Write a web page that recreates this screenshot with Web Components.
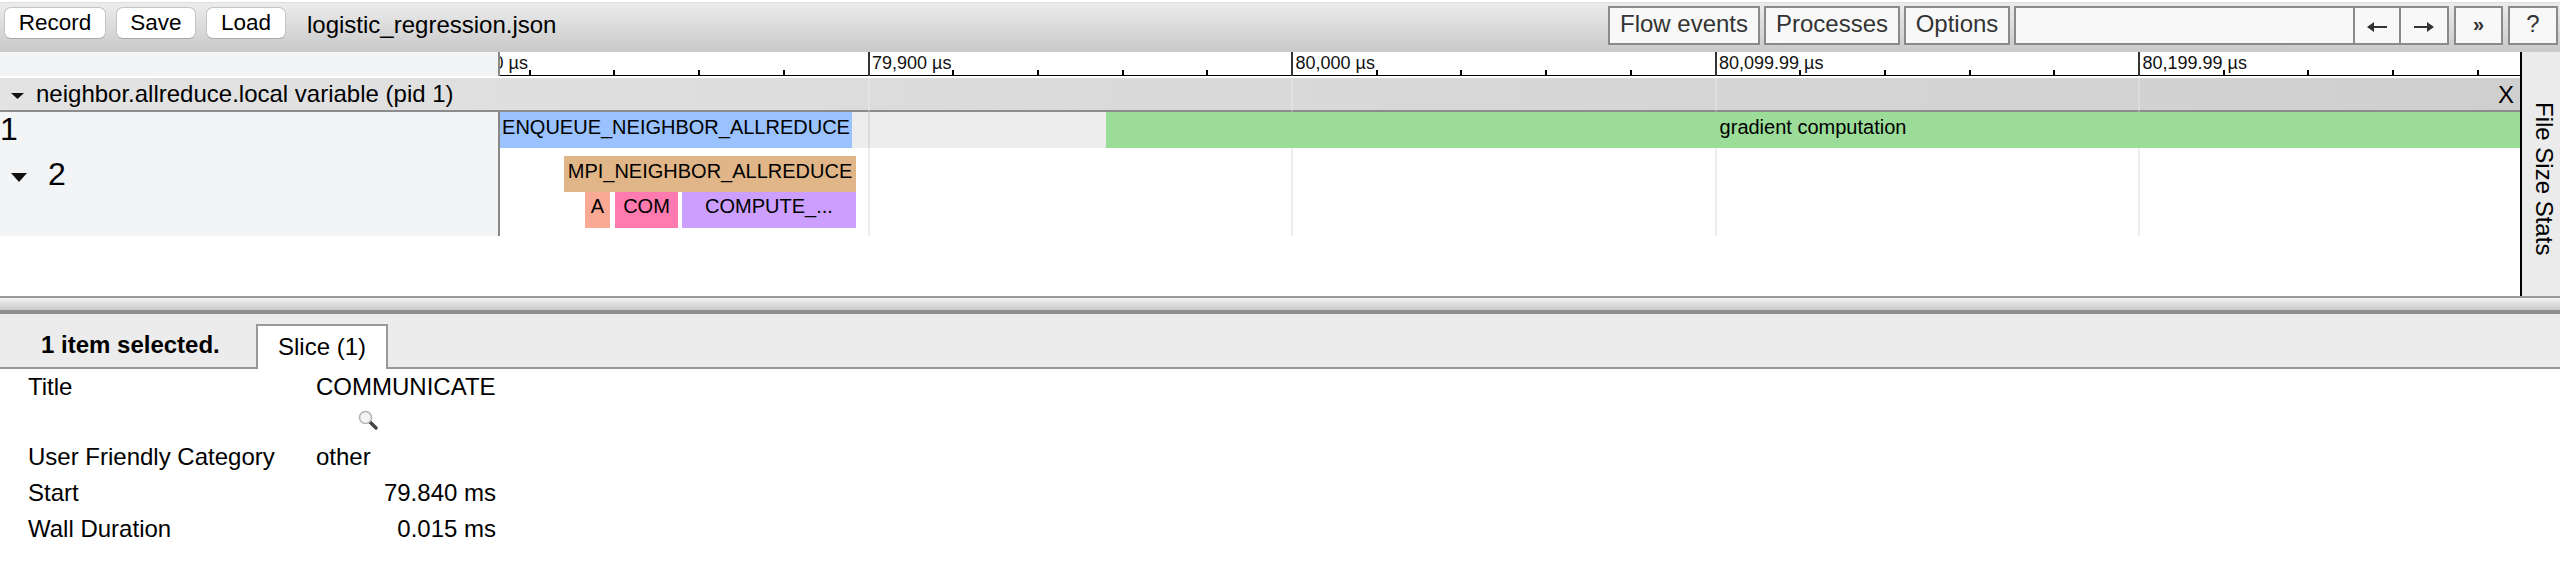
<!DOCTYPE html>
<html><head><meta charset="utf-8">
<style>
html,body{margin:0;padding:0;background:#fff;overflow:hidden}
body{font:24px "Liberation Sans",Arial,sans-serif;color:#000}
</style></head><body>
<tv-app>
  <tv-toolbar title-text="logistic_regression.json"></tv-toolbar>
  <tv-main>
    <tv-timeline></tv-timeline>
    <tv-side>File Size Stats</tv-side>
  </tv-main>
  <tv-resizer></tv-resizer>
  <tv-analysis></tv-analysis>
</tv-app>
<script>
function def(name, css, html, init){
  customElements.define(name, class extends HTMLElement{
    constructor(){super();const s=this.attachShadow({mode:'open'});
      s.innerHTML='<style>'+css+'</style>'+(typeof html==='function'?html(this):html);}
    connectedCallback(){ if(init) init(this); }
  });
}
const MAJ=[445,868.5,1292,1715.5,2139];
const LANE=500;

def('tv-app',':host{display:flex;flex-direction:column;width:2560px;height:582px;overflow:hidden}','<slot></slot>');

def('tv-light-btn',`:host{display:flex;align-items:center;justify-content:center;box-sizing:border-box;height:32px;background:#fff;border:1px solid #c4c4c4;border-bottom-color:#aaa;border-radius:7px;font-size:22.5px;color:#000}`,'<slot></slot>');
def('tv-box-btn',`:host{display:flex;align-items:center;justify-content:center;box-sizing:border-box;height:39px;background:#f8f8f8;border:2px solid #8a8a8a;font-size:24px;color:#333;padding-bottom:3px}`,'<slot></slot>');

def('tv-toolbar',`
:host{display:block;height:52px;box-sizing:border-box;padding-top:2px;background:#fff}
.bar{border-top:1px solid #dcdce2;box-sizing:border-box;height:50px;background:linear-gradient(#ececec,#c9c9c9);display:flex;align-items:flex-start;padding:0 2px 0 4px}
.l{display:flex;gap:10px;margin-top:4px}
.t{margin-left:21px;margin-top:7px;font-size:24px;line-height:30px;color:#000}
.sp{flex:1}
.r{display:flex;margin-top:3px}
svg{display:block;margin-top:5px}
`,`<div class="bar">
<div class="l"><tv-light-btn style="width:102px">Record</tv-light-btn><tv-light-btn style="width:80px">Save</tv-light-btn><tv-light-btn style="width:80px">Load</tv-light-btn></div>
<div class="t">logistic_regression.json</div><div class="sp"></div>
<div class="r">
<tv-box-btn style="width:152px">Flow events</tv-box-btn>
<tv-box-btn style="width:136px;margin-left:4px">Processes</tv-box-btn>
<tv-box-btn style="width:106px;margin-left:4px">Options</tv-box-btn>
<tv-box-btn style="width:341px;margin-left:4px"></tv-box-btn>
<tv-box-btn style="width:48px;margin-left:-2px"><svg width="20" height="10" viewBox="0 0 20 10"><path d="M0 5L7 0V4H20V6H7V10Z" fill="#333"/></svg></tv-box-btn>
<tv-box-btn style="width:50px;margin-left:-2px"><svg width="20" height="10" viewBox="0 0 20 10"><path d="M20 5L13 0V4H0V6H13V10Z" fill="#333"/></svg></tv-box-btn>
<tv-box-btn style="width:49px;margin-left:5px"><span style="font-size:20px;font-weight:bold">»</span></tv-box-btn>
<tv-box-btn style="width:50px;margin-left:5px">?</tv-box-btn>
</div></div>`);

def('tv-main',':host{display:flex;height:244px}','<slot></slot>');

def('tv-side',`:host{display:flex;box-sizing:border-box;width:40px;border-left:2px solid #000;background:#ebebeb;padding:50px 0 0 1px;font-size:24px;color:#000;writing-mode:vertical-rl;line-height:32px}`,'<slot></slot>');

def('tv-ruler',`
:host{display:flex;height:24px}
.l{width:500px;flex:none;box-sizing:border-box;background:#f3f4f6;border-right:2px solid #888}
.lane{position:relative;flex:1;overflow:hidden;background:#fff}
.base{position:absolute;left:0;right:0;top:23px;height:1px;background:#000}
.tk{position:absolute;background:#000;width:2px}
.lb{position:absolute;top:0;font-size:18px;line-height:22px;color:#111;white-space:nowrap}
`,()=>{
  let h='<div class="l"></div><div class="lane"><div class="base"></div>';
  const names=['79,800 µs','79,900 µs','80,000 µs','80,099.99 µs','80,199.99 µs'];
  MAJ.forEach((m,i)=>{
    h+=`<div class="tk" style="left:${m-LANE-1}px;top:0;height:24px;background:#333"></div>`;
    h+=`<div class="lb" style="left:${m+3.5-LANE}px">${names[i]}</div>`;
    for(let k=1;k<5;k++){const x=m+k*84.7;if(x<2520)h+=`<div class="tk" style="left:${Math.round(x-LANE-1)}px;top:18px;height:6px"></div>`;}
  });
  return h+'</div>';
});

def('tv-process',`
:host{display:flex;align-items:flex-start;box-sizing:border-box;height:34px;margin-top:2px;border-bottom:2px solid #8c8c8c;background:linear-gradient(90deg,#e3e3e3,#cfcfcf);position:relative;line-height:31px;font-size:24px}
svg{margin:15px 12px 0 11px;flex:none}
.x{margin-left:auto;margin-right:6px;font-size:24px;line-height:30px;margin-top:2px}
.g{position:absolute;top:0;bottom:-2px;width:2px;background:rgba(255,255,255,.22)}
`,()=>'<svg width="13" height="6" viewBox="0 0 13 6"><path d="M0 0H13L6.5 6Z" fill="#111"/></svg><span>neighbor.allreduce.local variable (pid 1)</span><span class="x">X</span>'+MAJ.slice(1).map(m=>`<div class="g" style="left:${m-1}px"></div>`).join(''));

def('tv-slice',`
:host{position:absolute;display:block;box-sizing:border-box;height:36px;line-height:30px;font-size:20px;text-align:center;white-space:nowrap;overflow:hidden;color:#000}
`,'<slot></slot>',el=>{
  el.style.left=(el.getAttribute('x')-LANE)+'px';
  el.style.width=el.getAttribute('w')+'px';
  el.style.top=(el.getAttribute('y')||0)+'px';
  el.style.background=el.getAttribute('c');
});

def('tv-track',`
:host{display:flex}
.l{width:500px;flex:none;box-sizing:border-box;background:#f3f4f6;border-right:2px solid #888;font-size:32px;line-height:35px;display:flex}
.lane{position:relative;flex:1;overflow:hidden}
.g{position:absolute;top:0;bottom:0;width:2px}
`,el=>{
  return `<div class="l"><slot name="label"></slot></div><div class="lane"><div id="bg" style="position:absolute;inset:0"></div>`+
    MAJ.slice(1).map(m=>`<div class="g" style="left:${m-LANE-1}px;background:rgba(0,0,0,.07)"></div>`).join('')+`<slot></slot></div>`;
},el=>{
  el.style.height=el.getAttribute('h')+'px';
  const b=el.getAttribute('bg'); if(b) el.shadowRoot.getElementById('bg').style.background=b;
});

def('tv-timeline',`:host{display:block;flex:1;min-width:0;background:#fff}
.lab2{display:flex;align-items:flex-start;padding-top:9px}
svg{margin:16px 21px 0 11px}
.sub{line-height:29px}`,`
<tv-ruler></tv-ruler>
<tv-process></tv-process>
<tv-track h="36" bg="#ededed">
  <span slot="label">1</span>
  <tv-slice x="500" w="352" c="#99c2ff">ENQUEUE_NEIGHBOR_ALLREDUCE</tv-slice>
  <tv-slice x="1106" w="1414" c="#9bdc99">gradient computation</tv-slice>
</tv-track>
<tv-track h="88">
  <span slot="label" class="lab2"><svg width="16" height="9" viewBox="0 0 16 9"><path d="M0 0H16L8 9Z" fill="#111"/></svg>2</span>
  <tv-slice x="564" w="292" y="8" c="#e0b688">MPI_NEIGHBOR_ALLREDUCE</tv-slice>
  <tv-slice class="sub" x="585" w="25" y="44" c="#f9a994">A</tv-slice>
  <tv-slice class="sub" x="615" w="63" y="44" c="#ff7aae">COM</tv-slice>
  <tv-slice class="sub" x="682" w="174" y="44" c="#cc9fff">COMPUTE_...</tv-slice>
</tv-track>`);

def('tv-resizer',`:host{display:block;box-sizing:border-box;height:18px;border-top:2px solid #999;border-bottom:4px solid #909090;background:linear-gradient(#f2f2f2,#c9c9c9)}`,'');

def('tv-analysis',`
:host{display:block;flex:1;background:#fff;font-size:24px}
.tabs{display:flex;align-items:flex-end;box-sizing:border-box;height:55px;background:#ececec;border-bottom:2px solid #999}
.sel{font-weight:bold;margin:0 38px 0 41px;line-height:44px;width:177px;white-space:nowrap}
.tab{box-sizing:border-box;width:132px;height:45px;margin-bottom:-2px;background:#fff;border:2px solid #999;border-bottom:none;text-align:center;line-height:42px}
.grid{display:grid;grid-template-columns:288px 180px;padding-left:28px;line-height:36px}
.num{text-align:right}
.mag{display:block;margin:5px 0 0 42px;height:20px}
.v1{height:70px;white-space:nowrap}
`,`<div class="tabs"><div class="sel">1 item selected.</div><div class="tab">Slice (1)</div></div>
<div class="grid">
<div>Title</div><div class="v1">COMMUNICATE
<svg class="mag" width="20" height="20" viewBox="0 0 20 20"><path d="M12 12L18 18" stroke="#444" stroke-width="3.4" stroke-linecap="round"/><circle cx="7.5" cy="7.5" r="6" fill="#f4f4f4" stroke="#b4b4b4" stroke-width="1.6"/></svg></div>
<div>User Friendly Category</div><div>other</div>
<div>Start</div><div class="num">79.840 ms</div>
<div>Wall Duration</div><div class="num">0.015 ms</div>
</div>`);
</script>
</body></html>
